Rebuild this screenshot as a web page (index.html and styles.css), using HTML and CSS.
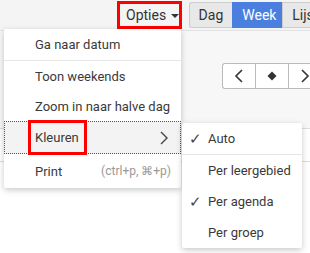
FILE: index.html
```html
<!DOCTYPE html>
<html lang="nl">
<head>
    <meta charset="UTF-8">
    <title>Agenda</title>
    <link rel="stylesheet" href="styles.css">
</head>
<body>

    <!-- Toolbar -->
    <div class="toolbar">
        <button class="btn-opties">Opties <span class="caret"></span></button>
        <div class="btn-group">
            <button class="btn">Dag</button>
            <button class="btn active">Week</button>
            <button class="btn">Lijst</button>
        </div>
    </div>

    <div class="navbar">
        <div class="nav-group">
            <button class="nav-btn">
                <svg width="10" height="14" viewBox="0 0 10 14"><path d="M8 1 L2 7 L8 13" fill="none" stroke="#333" stroke-width="1.6"/></svg>
            </button>
            <button class="nav-btn">
                <svg width="10" height="10" viewBox="0 0 10 10"><path d="M5 0.5 L9.5 5 L5 9.5 L0.5 5 Z" fill="#333"/></svg>
            </button>
            <button class="nav-btn">
                <svg width="10" height="14" viewBox="0 0 10 14"><path d="M2 1 L8 7 L2 13" fill="none" stroke="#333" stroke-width="1.6"/></svg>
            </button>
        </div>
    </div>

    <div class="calendar">
        <div class="cal-row"></div>
        <div class="cal-row"></div>
    </div>

    <!-- Opties menu -->
    <ul class="menu">
        <li class="item divided">Ga naar datum</li>
        <li class="item">Toon weekends</li>
        <li class="item">Zoom in naar halve dag</li>
        <li class="item focus"><span class="marked">Kleuren</span>
            <svg class="chevron" width="8" height="14" viewBox="0 0 8 14"><path d="M1 1 L7 7 L1 13" fill="none" stroke="#444" stroke-width="1.4"/></svg>
        </li>
        <li class="item print">Print <span class="shortcut">(ctrl+p, ⌘+p)</span></li>
    </ul>

    <!-- Kleuren submenu -->
    <ul class="submenu">
        <li class="sub-item divided"><span class="check">✓</span>Auto</li>
        <li class="sub-item"><span class="check"></span>Per leergebied</li>
        <li class="sub-item"><span class="check">✓</span>Per agenda</li>
        <li class="sub-item"><span class="check"></span>Per groep</li>
    </ul>

</body>
</html>
```

FILE: styles.css
```css
body {
    margin: 0;
    width: 310px;
    height: 253px;
    overflow: hidden;
    font-family: Roboto, "Liberation Sans", sans-serif;
    font-size: 13px;
    color: #333;
    background-color: #fff;
    position: relative;
}
button {
    font-family: inherit;
    font-size: 14px;
    cursor: pointer;
}
.toolbar {
    display: flex;
    align-items: flex-start;
    gap: 7px;
    height: 30px;
    padding: 1px 0 0 117px;
    background-color: #f4f4f4;
    box-sizing: border-box;
    white-space: nowrap;
    overflow: hidden;
}
.btn-opties {
    height: 28px;
    width: 66px;
    padding: 0 0 0 6px;
    text-align: left;
    color: #333;
    background-color: #f4f4f4;
    border: 3px solid #f00;
}
.caret {
    display: inline-block;
    border-left: 4px solid transparent;
    border-right: 4px solid transparent;
    border-top: 4px solid #333;
    vertical-align: middle;
    margin-left: 1px;
}
.btn-group {
    display: flex;
    margin-top: 1px;
}
.btn {
    height: 26px;
    padding: 0 9px;
    color: #333;
    background-color: #e8e8e8;
    border: 1px solid #ccc;
    border-right: none;
}
.btn:first-child {
    border-radius: 3px 0 0 3px;
}
.btn.active {
    color: #fff;
    background-color: #4a7fe0;
    border-color: #4a7fe0;
    width: 50px;
}
.navbar {
    display: flex;
    justify-content: flex-start;
    padding: 32px 0 0 222px;
    height: 98px;
    box-sizing: border-box;
    background-color: #f7f7f7;
    border-top: 1px solid #e2e2e2;
}
.nav-group {
    display: flex;
    height: 26px;
}
.nav-btn {
    width: 33px;
    height: 26px;
    padding: 0;
    background-color: #fff;
    border: 1px solid #bbb;
    border-right: none;
    display: flex;
    align-items: center;
    justify-content: center;
}
.nav-btn:first-child {
    border-radius: 3px 0 0 3px;
}
.calendar {
    background-color: #fff;
}
.cal-row {
    height: 32px;
    border-top: 1px solid #ddd;
}
.menu, .submenu {
    list-style: none;
    margin: 0;
    padding: 0;
    position: absolute;
    background-color: #fff;
    border-radius: 2px;
    box-shadow: 0 2px 6px rgba(0, 0, 0, 0.22);
}
.menu {
    left: 4px;
    top: 29px;
    width: 177px;
}
.item {
    display: flex;
    align-items: center;
    height: 30px;
    padding-left: 31px;
    color: #3a3a3a;
    white-space: nowrap;
}
.item.divided {
    height: 31px;
    border-bottom: 1px solid #e6e6e6;
}
.item.focus {
    height: 31px;
    background-color: #f3f3f3;
    border: 1px dotted #555;
    padding-left: 30px;
}
.marked {
    outline: 3px solid #f00;
    padding: 7px 5px 7px 4px;
    margin-left: -4px;
}
.chevron {
    margin-left: auto;
    margin-right: 12px;
}
.item.print {
    height: 34px;
}
.shortcut {
    margin-left: auto;
    margin-right: 10px;
    font-size: 12px;
    color: #999;
}
.submenu {
    left: 182px;
    top: 123px;
    width: 120px;
}
.sub-item {
    display: flex;
    align-items: center;
    height: 31px;
    color: #3a3a3a;
    white-space: nowrap;
}
.sub-item.divided {
    border-bottom: 1px solid #e6e6e6;
}
.check {
    width: 26px;
    text-align: center;
    font-size: 15px;
    color: #444;
}
```
